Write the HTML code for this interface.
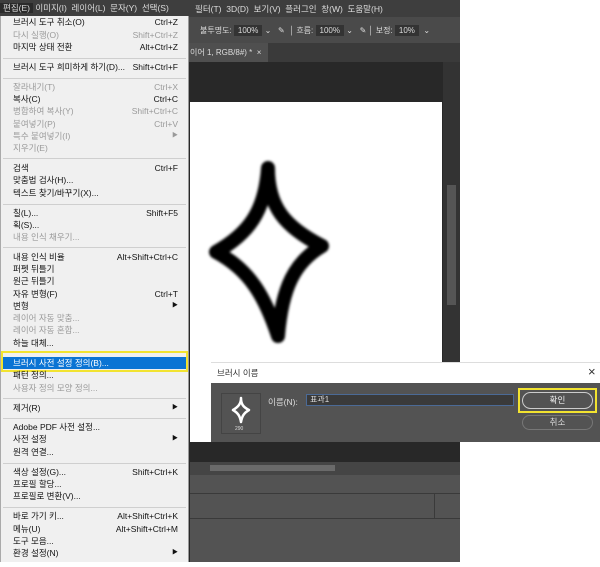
<!DOCTYPE html>
<html><head><meta charset="utf-8"><style>
*{margin:0;padding:0;box-sizing:border-box}
body{width:600px;height:567px;background:#fff;position:relative;overflow:hidden;font-family:"Liberation Sans","Noto Sans CJK KR","NanumGothic",sans-serif;font-size:8.5px}
.a{position:absolute}
.mi{position:absolute;left:13px;width:170px;height:12px;line-height:12px;color:#111;white-space:nowrap}
.mi span{position:absolute;right:5px;top:0}
.d{color:#9a9a9a}
.sep{position:absolute;left:3px;width:183px;height:1px;background:#cfcfcf}
.arr{position:absolute;right:2px;top:0;font-size:6px}
</style></head><body>
<div class="a" style="left:0;top:0;width:460px;height:562px;background:#282828"></div>
<div class="a" style="left:0;top:0;width:460px;height:17px;background:#3e3e3e"></div>
<div class="a" style="left:0;top:17px;width:460px;height:26px;background:#4a4a4a"></div>
<div class="a" style="left:0;top:43px;width:460px;height:19px;background:#3a3a3a"></div>
<div class="a" style="left:188px;top:43px;width:80px;height:19px;background:#4f4f4f;color:#ddd;font-size:8px;line-height:19px;padding-left:2px">이어 1, RGB/8#) * &nbsp;×</div>
<div class="a" style="left:443px;top:62px;width:17px;height:380px;background:#333"></div>
<div class="a" style="left:447px;top:185px;width:9px;height:120px;background:#555"></div>
<div class="a" style="left:190px;top:102px;width:252px;height:340px;background:#fff"></div>
<svg class="a" style="left:190px;top:102px" width="252" height="270">
<defs><filter id="b"><feGaussianBlur stdDeviation="1.3"/></filter></defs>
<path d="M78 66 C78 105 95 125 132 144 C105 160 92 185 88 234 C75 195 60 168 26 150 C58 132 75 110 78 66 Z" fill="none" stroke="#000" stroke-width="14" stroke-linejoin="round" filter="url(#b)"/>
</svg>
<div class="a" style="left:195px;top:3px;color:#ddd;font-size:8.5px;white-space:nowrap">필터(T) &nbsp;3D(D) &nbsp;보기(V) &nbsp;플러그인 &nbsp;창(W) &nbsp;도움말(H)</div>
<div class="a" style="left:200px;top:25px;color:#ddd;font-size:8px;white-space:nowrap">불투명도: <span style="background:#333;padding:1px 4px">100%</span> ⌄ &nbsp; ✎ &nbsp;│ 흐름: <span style="background:#333;padding:1px 4px">100%</span> ⌄ &nbsp; ✎ │ 보정: <span style="background:#333;padding:1px 4px">10%</span> &nbsp;⌄</div>
<div class="a" style="left:190px;top:462px;width:270px;height:13px;background:#454545"></div>
<div class="a" style="left:210px;top:465px;width:125px;height:6px;background:#6a6a6a"></div>
<div class="a" style="left:190px;top:475px;width:270px;height:87px;background:#535353"></div>
<div class="a" style="left:190px;top:493px;width:270px;height:1px;background:#3a3a3a"></div>
<div class="a" style="left:190px;top:518px;width:270px;height:1px;background:#3a3a3a"></div>
<div class="a" style="left:434px;top:494px;width:1px;height:24px;background:#3a3a3a"></div>
<div class="a" style="left:0;top:0;width:188px;height:17px;background:#3e3e3e;color:#ddd;font-size:8.5px;line-height:16px;white-space:nowrap"><span style="background:#2a2a2a;padding:0 3px">편집(E)</span> 이미지(I) &nbsp;레이어(L) &nbsp;문자(Y) &nbsp;선택(S)</div>
<div class="a" style="left:0;top:16px;width:189px;height:546px;background:#f0f0f0;border-right:1px solid #999;border-left:1px solid #aaa"></div>
<div class="a" style="left:2px;top:357px;width:185px;height:12px;background:#0a74d4"></div>
<div class="a" style="left:1px;top:351px;width:187px;height:21px;border:2px solid #f2e330"></div>
<div class="mi" style="top:16px">브러시 도구 취소(O)<span>Ctrl+Z</span></div>
<div class="mi d" style="top:29px">다시 실행(O)<span>Shift+Ctrl+Z</span></div>
<div class="mi" style="top:41px">마지막 상태 전환<span>Alt+Ctrl+Z</span></div>
<div class="sep" style="top:58px"></div>
<div class="mi" style="top:61px">브러시 도구 희미하게 하기(D)...<span>Shift+Ctrl+F</span></div>
<div class="sep" style="top:78px"></div>
<div class="mi d" style="top:81px">잘라내기(T)<span>Ctrl+X</span></div>
<div class="mi" style="top:93px">복사(C)<span>Ctrl+C</span></div>
<div class="mi d" style="top:105px">병합하여 복사(Y)<span>Shift+Ctrl+C</span></div>
<div class="mi d" style="top:118px">붙여넣기(P)<span>Ctrl+V</span></div>
<div class="mi d" style="top:130px">특수 붙여넣기(I)<span class="arr">▶</span></div>
<div class="mi d" style="top:142px">지우기(E)</div>
<div class="sep" style="top:158px"></div>
<div class="mi" style="top:162px">검색<span>Ctrl+F</span></div>
<div class="mi" style="top:174px">맞춤법 검사(H)...</div>
<div class="mi" style="top:187px">텍스트 찾기/바꾸기(X)...</div>
<div class="sep" style="top:204px"></div>
<div class="mi" style="top:207px">칠(L)...<span>Shift+F5</span></div>
<div class="mi" style="top:219px">획(S)...</div>
<div class="mi d" style="top:231px">내용 인식 채우기...</div>
<div class="sep" style="top:247px"></div>
<div class="mi" style="top:251px">내용 인식 비율<span>Alt+Shift+Ctrl+C</span></div>
<div class="mi" style="top:263px">퍼펫 뒤틀기</div>
<div class="mi" style="top:275px">원근 뒤틀기</div>
<div class="mi" style="top:288px">자유 변형(F)<span>Ctrl+T</span></div>
<div class="mi" style="top:300px">변형<span class="arr">▶</span></div>
<div class="mi d" style="top:312px">레이어 자동 맞춤...</div>
<div class="mi d" style="top:324px">레이어 자동 혼합...</div>
<div class="mi" style="top:337px">하늘 대체...</div>
<div class="mi" style="top:357px;color:#fff">브러시 사전 설정 정의(B)...</div>
<div class="mi" style="top:369px">패턴 정의...</div>
<div class="mi d" style="top:382px">사용자 정의 모양 정의...</div>
<div class="sep" style="top:398px"></div>
<div class="mi" style="top:402px">제거(R)<span class="arr">▶</span></div>
<div class="sep" style="top:418px"></div>
<div class="mi" style="top:421px">Adobe PDF 사전 설정...</div>
<div class="mi" style="top:433px">사전 설정<span class="arr">▶</span></div>
<div class="mi" style="top:446px">원격 연결...</div>
<div class="sep" style="top:463px"></div>
<div class="mi" style="top:466px">색상 설정(G)...<span>Shift+Ctrl+K</span></div>
<div class="mi" style="top:478px">프로필 할당...</div>
<div class="mi" style="top:490px">프로필로 변환(V)...</div>
<div class="sep" style="top:507px"></div>
<div class="mi" style="top:510px">바로 가기 키...<span>Alt+Shift+Ctrl+K</span></div>
<div class="mi" style="top:523px">메뉴(U)<span>Alt+Shift+Ctrl+M</span></div>
<div class="mi" style="top:535px">도구 모음...</div>
<div class="mi" style="top:547px">환경 설정(N)<span class="arr">▶</span></div>
<div class="a" style="left:211px;top:362px;width:389px;height:21px;background:#fff;border-top:1px solid #ddd"></div>
<div class="a" style="left:217px;top:367px;color:#333;font-size:8.5px">브러시 이름</div>
<div class="a" style="left:588px;top:364px;color:#333;font-size:13px">×</div>
<div class="a" style="left:211px;top:383px;width:389px;height:59px;background:#535353"></div>
<div class="a" style="left:221px;top:393px;width:40px;height:41px;border:1px solid #444"></div>
<svg class="a" style="left:229px;top:395px" width="24" height="30"><path d="M12 3 C12 9 14 12 20 15 C15 18 13 21 12 27 C11 21 9 18 4 15 C9 12 12 9 12 3 Z" fill="none" stroke="#fff" stroke-width="2.5" stroke-linejoin="round"/></svg>
<div class="a" style="left:235px;top:426px;color:#ddd;font-size:5px">290</div>
<div class="a" style="left:268px;top:396px;color:#ddd;font-size:8.5px">이름(N):</div>
<div class="a" style="left:306px;top:394px;width:208px;height:12px;background:#3a3a3a;border:1px solid #4b6a96;color:#ddd;font-size:8px;line-height:10px;padding-left:3px">표과1</div>
<div class="a" style="left:518px;top:388px;width:79px;height:25px;border:2px solid #f2e330"></div>
<div class="a" style="left:522px;top:392px;width:71px;height:17px;border:1px solid #ccc;border-radius:9px;color:#eee;text-align:center;line-height:15px;font-size:8.5px">확인</div>
<div class="a" style="left:522px;top:415px;width:71px;height:15px;border:1px solid #777;border-radius:8px;color:#ddd;text-align:center;line-height:13px;font-size:8.5px">취소</div>
</body></html>
